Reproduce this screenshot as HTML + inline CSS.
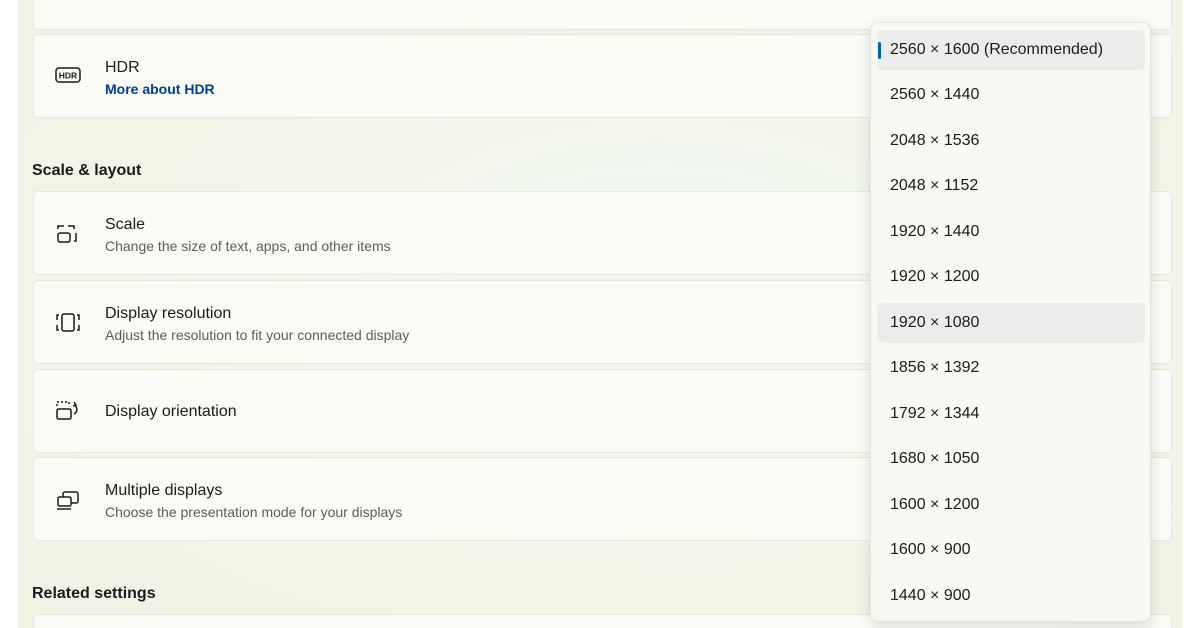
<!DOCTYPE html>
<html style="width:1200px;height:628px;overflow:hidden"><head><style>
body{margin:0;width:1200px;height:628px;overflow:hidden;background:#fff;font-family:"Liberation Sans",sans-serif;position:relative}
.bg{position:absolute;left:17px;top:0;width:1166px;height:628px;background:radial-gradient(ellipse at 55% 45%,#eef6f1 0%,#f3f5ea 45%,#f1f2e4 100%)}
.card{position:absolute;left:33px;width:1139px;background:rgba(252,252,248,0.85);border:1px solid #e6e8df;border-radius:5px;box-sizing:border-box}
.t{position:absolute;left:71px;font-size:16px;color:#1b1b1b}
.s{position:absolute;left:71px;font-size:14px;color:#5c5c5c}
.ic{position:absolute;left:21px}
.h{position:absolute;left:32px;font-size:16px;font-weight:bold;color:#1b1b1b}
.dd{position:absolute;left:870px;top:22px;width:281px;height:600px;background:#f9f9f3;border:1px solid #e2e3dc;border-radius:8px;box-shadow:0 4px 14px rgba(0,0,0,.12);box-sizing:border-box}
.it{position:absolute;left:6px;width:268px;height:40px;line-height:40px;padding-left:13px;box-sizing:border-box;font-size:16px;color:#1b1b1b;border-radius:5px}
.sel{background:#ececea}
</style></head><body>
<div class="bg"></div>
<div class="card" style="top:-5px;height:35px"></div>
<div class="card" style="top:34px;height:84px">
<svg class="ic" style="top:32px" width="26" height="16" viewBox="0 0 26 16"><rect x="1" y="1" width="24" height="14" rx="3" fill="none" stroke="#1b1b1b" stroke-width="1.5"/><text x="13" y="11.5" font-size="8.5" font-weight="bold" text-anchor="middle" font-family="Liberation Sans" fill="#1b1b1b">HDR</text></svg>
<div class="t" style="top:24px">HDR</div><div class="s" style="top:46px;color:#003e92;font-weight:bold;font-size:14px">More about HDR</div></div>
<div class="h" style="top:162px">Scale &amp; layout</div>
<div class="card" style="top:191px;height:84px">
<svg class="ic" style="top:30px" width="24" height="24" viewBox="0 0 24 24" fill="none" stroke="#1b1b1b" stroke-width="1.5"><path d="M3 7V4h6M13 4h6v3M21 11v8h-2"/><rect x="3" y="11" width="12" height="9" rx="2"/></svg>
<div class="t" style="top:24px">Scale</div><div class="s" style="top:46px">Change the size of text, apps, and other items</div></div>
<div class="card" style="top:280px;height:84px">
<svg class="ic" style="top:31px" width="26" height="22" viewBox="0 0 26 22" fill="none" stroke="#1b1b1b" stroke-width="1.5"><path d="M4 3H2v5M2 13v5h2M22 3h2v5M24 13v5h-2"/><rect x="7" y="2" width="12" height="17" rx="2"/></svg>
<div class="t" style="top:24px">Display resolution</div><div class="s" style="top:46px">Adjust the resolution to fit your connected display</div></div>
<div class="card" style="top:369px;height:84px">
<svg class="ic" style="top:30px" width="26" height="22" viewBox="0 0 26 22" fill="none" stroke="#1b1b1b" stroke-width="1.5"><path d="M2 6V2h12v4" stroke-dasharray="2 2"/><rect x="2" y="9" width="14" height="10" rx="1.5"/><path d="M19 5a5 5 0 0 1 0 9M19 2l2 3-3 1"/></svg>
<div class="t" style="top:33px">Display orientation</div></div>
<div class="card" style="top:457px;height:84px">
<svg class="ic" style="top:32px" width="26" height="22" viewBox="0 0 26 22" fill="none" stroke="#1b1b1b" stroke-width="1.5"><rect x="8" y="2" width="15" height="11" rx="2"/><rect x="3" y="7" width="13" height="9" rx="1.5" fill="#fbfbf8"/><path d="M2 19h14"/></svg>
<div class="t" style="top:24px">Multiple displays</div><div class="s" style="top:46px">Choose the presentation mode for your displays</div></div>
<div class="h" style="top:585px">Related settings</div>
<div class="card" style="top:614px;height:14px;border-bottom:none;border-radius:5px 5px 0 0"></div>
<div class="dd">
<div class="it sel" style="top:7px">2560 × 1600 (Recommended)<div style="position:absolute;left:1px;top:12px;width:3px;height:17px;background:#0062b8;border-radius:2px"></div></div>
<div class="it" style="top:52px">2560 × 1440</div>
<div class="it" style="top:98px">2048 × 1536</div>
<div class="it" style="top:143px">2048 × 1152</div>
<div class="it" style="top:189px">1920 × 1440</div>
<div class="it" style="top:234px">1920 × 1200</div>
<div class="it sel" style="top:280px">1920 × 1080</div>
<div class="it" style="top:325px">1856 × 1392</div>
<div class="it" style="top:371px">1792 × 1344</div>
<div class="it" style="top:416px">1680 × 1050</div>
<div class="it" style="top:462px">1600 × 1200</div>
<div class="it" style="top:507px">1600 × 900</div>
<div class="it" style="top:553px">1440 × 900</div>
</div>
</body></html>
